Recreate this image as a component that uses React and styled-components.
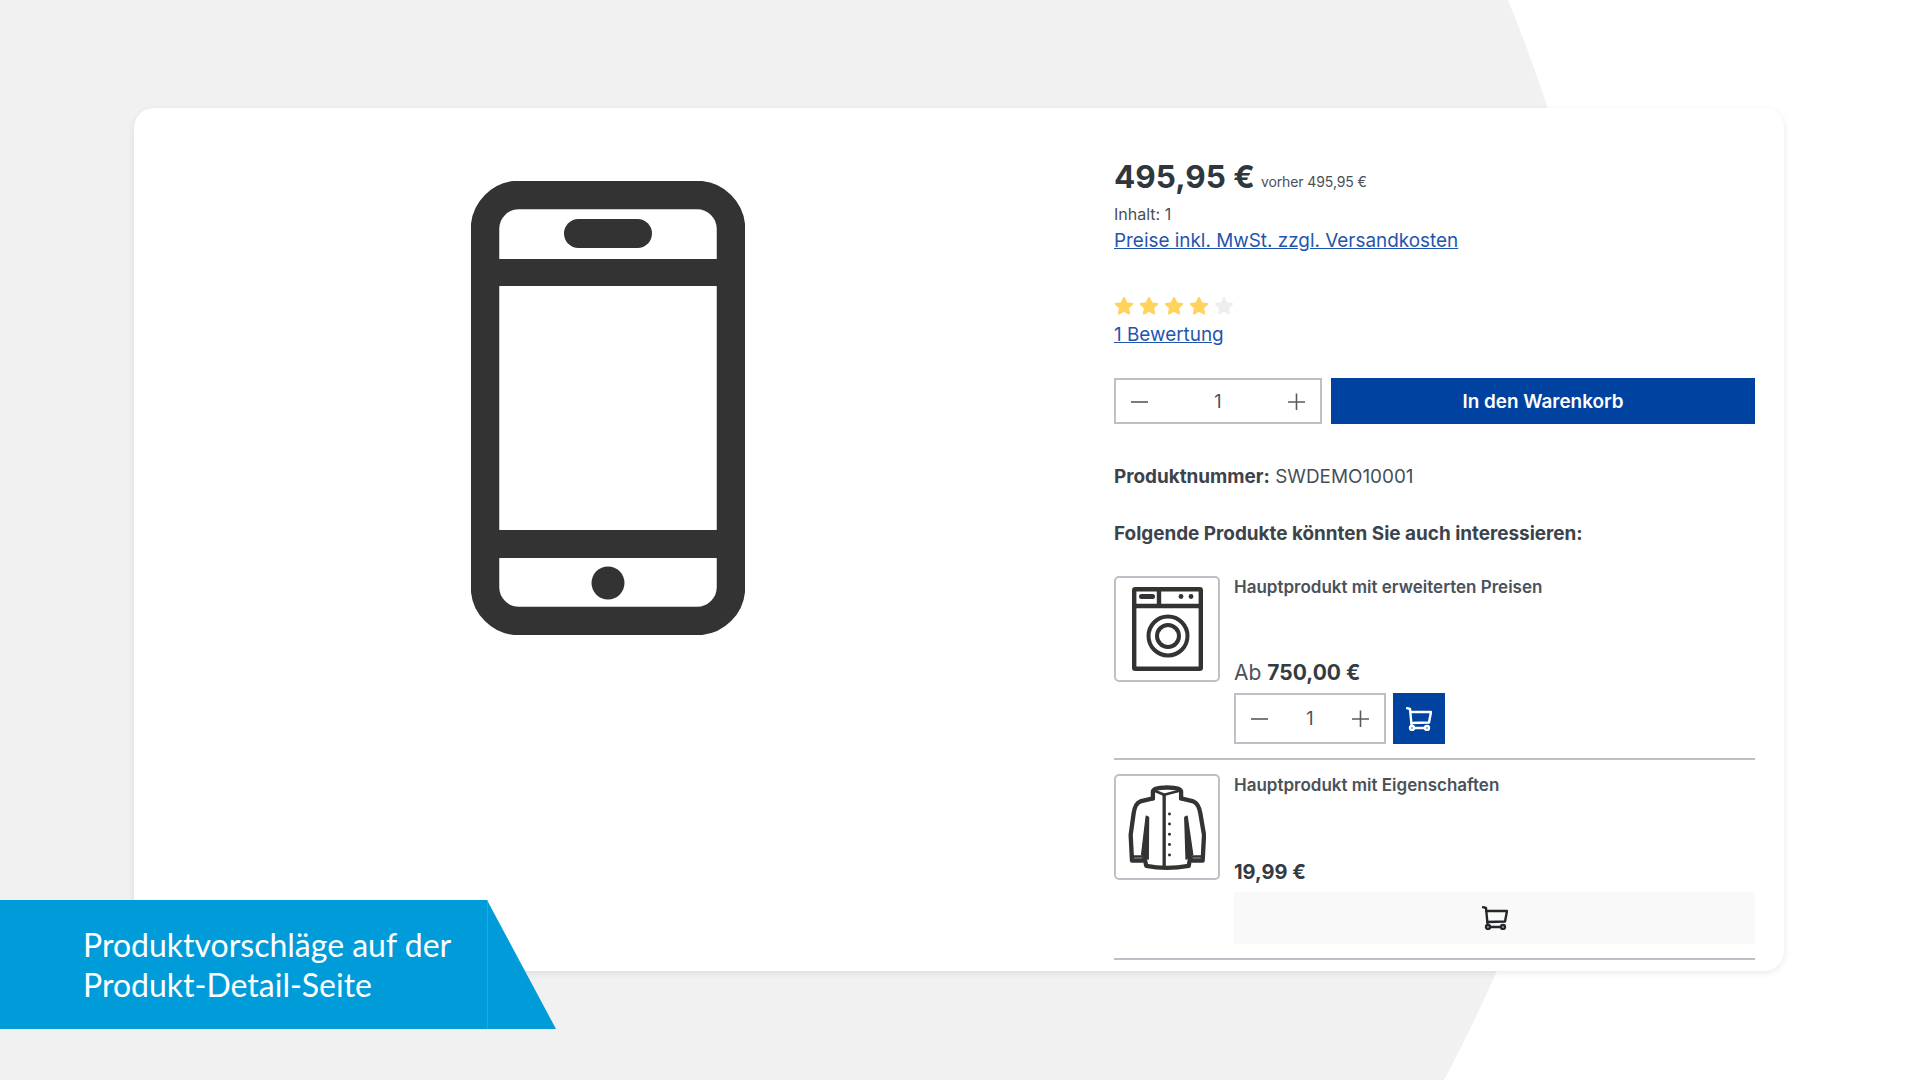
import styled, { createGlobalStyle } from "styled-components";

const GlobalStyle = createGlobalStyle`
  html, body {
    margin: 0;
    padding: 0;
    background: #fff;
  }
  * {
    box-sizing: border-box;
  }
`;

const Page = styled.div`
  position: relative;
  width: 1920px;
  height: 1080px;
  overflow: hidden;
  padding: 108px 136px 0 134px;
  background: #fff;
  font-family: Inter, "Liberation Sans", sans-serif;
  color: #474f57;
`;

const GreyShape = styled.div`
  position: absolute;
  inset: 0;
  background: #f1f1f1;
  clip-path: path("M0 0 H1508 C1652 350 1646 700 1444 1080 H0 Z");
`;

const Card = styled.main`
  position: relative;
  display: grid;
  grid-template-columns: 948px 641px;
  column-gap: 32px;
  height: 863px;
  background: #fff;
  border-radius: 20px;
  box-shadow: 0 2px 7px rgba(0, 0, 0, 0.09);
`;

const Gallery = styled.div`
  display: flex;
  justify-content: center;
  padding-top: 73px;
`;

const Details = styled.div`
  padding-top: 49px;
`;

const PriceLine = styled.div`
  display: flex;
  align-items: baseline;
  gap: 6px;
  height: 40px;
  line-height: 40px;
`;

const Price = styled.span`
  font-size: 31.5px;
  font-weight: 700;
  color: #2f363d;
`;

const OldPrice = styled.span`
  font-size: 14px;
  letter-spacing: -0.1px;
  color: #4a5058;
  position: relative;
  top: -1px;
`;

const Meta = styled.div`
  margin-top: 5px;
  font-size: 16px;
  line-height: 24px;
  color: #4a5058;
`;

const TextLink = styled.a`
  display: block;
  margin-top: ${(props) => props.$top}px;
  font-size: 18.9px;
  line-height: 24px;
  color: #1f55ae;
  text-decoration: underline;
`;

const Stars = styled.div`
  display: flex;
  gap: 5px;
  margin-top: 43px;
  height: 20px;
  align-items: center;
`;

const BuyRow = styled.div`
  display: flex;
  gap: 9px;
  margin-top: 31px;
`;

const QtyBox = styled.div`
  display: flex;
  align-items: center;
  justify-content: space-between;
  flex: none;
  width: ${(props) => props.$width}px;
  height: ${(props) => props.$height}px;
  padding: 0 15px;
  border: 2px solid #bcc1c8;
  background: #fff;
  font-size: 18px;
  color: #474f57;
`;

const BuyButton = styled.button`
  flex: 1;
  height: 46px;
  border: 0;
  background: #0042a0;
  color: #fff;
  font-family: inherit;
  font-size: 18.9px;
  font-weight: 600;
`;

const ProductNumber = styled.div`
  margin-top: 41px;
  font-size: 18.9px;
  line-height: 24px;
  b {
    font-weight: 700;
    color: #3c434a;
  }
`;

const SuggestTitle = styled.div`
  margin-top: 33px;
  font-size: 18.9px;
  line-height: 24px;
  font-weight: 700;
  color: #3c434a;
`;

const SuggestList = styled.div`
  margin-top: 30px;
`;

const SuggestItem = styled.div`
  display: grid;
  grid-template-columns: 106px 1fr;
  column-gap: 14px;
  padding-bottom: 14px;
  margin-bottom: 14px;
  border-bottom: 2px solid #bcc1c8;
`;

const Thumb = styled.div`
  display: flex;
  align-items: center;
  justify-content: center;
  width: 106px;
  height: 106px;
  border: 2px solid #bcc1c8;
  border-radius: 5px;
`;

const ItemTitle = styled.div`
  font-size: 17px;
  line-height: 20px;
  font-weight: 600;
  color: #4a5259;
  padding-top: 1px;
`;

const ItemPrice = styled.div`
  margin-top: ${(props) => props.$top}px;
  font-size: ${(props) => props.$size}px;
  line-height: 24px;
  color: #4a5259;
  b {
    font-weight: 700;
    color: #343b42;
  }
`;

const ItemBuy = styled.div`
  display: flex;
  gap: 7px;
  margin-top: 8px;
`;

const CartButton = styled.button`
  display: flex;
  align-items: center;
  justify-content: center;
  width: 52px;
  height: 51px;
  padding: 0;
  border: 0;
  background: #0042a0;
  color: #fff;
`;

const WideCartButton = styled(CartButton)`
  width: 100%;
  height: 52px;
  margin-top: 8px;
  background: #f9f9f9;
  color: #23272b;
`;

const Banner = styled.div`
  position: absolute;
  left: 0;
  top: 900px;
  width: 556px;
  height: 129px;
  display: flex;
  align-items: center;
  padding-left: 83px;
  background: #009cda;
  clip-path: polygon(0 0, 487px 0, 100% 100%, 0 100%);
  font-family: Lato, "Open Sans", "Liberation Sans", sans-serif;
  font-size: 32px;
  line-height: 40px;
  color: #fff;
  &::after {
    content: "";
    position: absolute;
    left: 487px;
    top: 0;
    bottom: 0;
    width: 1px;
    background: #22a7de;
  }
`;

function PhoneIcon() {
  return (
    <svg width="274" height="454" viewBox="0 0 274 454" fill="none">
      <rect x="14" y="14" width="246" height="426" rx="34" stroke="#333" strokeWidth="28.5" />
      <rect x="14" y="78" width="246" height="27" fill="#333" />
      <rect x="14" y="349" width="246" height="28" fill="#333" />
      <rect x="93" y="38" width="88" height="29" rx="14.5" fill="#333" />
      <circle cx="137" cy="402" r="16.5" fill="#333" />
    </svg>
  );
}

function WasherIcon() {
  return (
    <svg width="71" height="84" viewBox="0 0 71 84" fill="none" stroke="#333">
      <rect x="2.2" y="2.2" width="66.6" height="79.6" rx="1" strokeWidth="4.4" />
      <path d="M2 19H69M27 2V19" strokeWidth="4.4" />
      <rect x="7" y="7" width="16" height="5" rx="2.5" fill="#333" stroke="none" />
      <circle cx="49" cy="9.5" r="2.4" fill="#333" stroke="none" />
      <circle cx="59" cy="9.5" r="2.4" fill="#333" stroke="none" />
      <circle cx="36" cy="49" r="19.5" strokeWidth="4" />
      <circle cx="36" cy="49" r="11" strokeWidth="4" />
    </svg>
  );
}

function JacketIcon() {
  return (
    <svg width="78" height="85" viewBox="85 75 235 255" fill="none" stroke="#333" strokeWidth="13" strokeLinejoin="round" strokeLinecap="round">
      <path d="M160 115V95Q160 82 203 82Q245 82 245 95V115" />
      <path d="M165 92L194 104L240 92" strokeWidth="8" />
      <path d="M160 115L122 124Q106 130 102 160L93 225L97 302H128L135 295L140 318Q200 330 268 318L272 295L279 302H310L314 225L303 160Q298 130 282 124L245 115" />
      <path d="M194 105V322" strokeWidth="10" />
      <path d="M97 290H128M279 290H310" strokeWidth="8" />
      <path d="M140 168L147 172L146 298L126 284Z" fill="#333" strokeWidth="4" />
      <path d="M263 168L256 172L260 298L280 284Z" fill="#333" strokeWidth="4" />
      {[162, 192, 223, 254, 285].map((y) => (
        <circle key={y} cx="210" cy={y} r="4.5" fill="#333" stroke="none" />
      ))}
    </svg>
  );
}

function CartIcon() {
  return (
    <svg width="26" height="24" viewBox="0 0 26 24" fill="none" stroke="currentColor" strokeWidth="2.4" strokeLinecap="round" strokeLinejoin="round">
      <path d="M1 1.2L4 2L5.5 17.5" />
      <path d="M4.3 5H25L23 15.5L5.3 16" />
      <circle cx="6" cy="21" r="2" />
      <circle cx="21" cy="21" r="2" />
      <path d="M8 21H19" />
    </svg>
  );
}

function Star({ filled }) {
  return (
    <svg width="20" height="20" viewBox="0 0 20 20">
      <path
        d="M10 2L12.5 7.2L18.2 7.9L14 11.8L15.1 17.5L10 14.7L4.9 17.5L6 11.8L1.8 7.9L7.5 7.2Z"
        fill={filled ? "#ffd35c" : "#eeeeee"}
        stroke={filled ? "#ffd35c" : "#eeeeee"}
        strokeWidth="2"
        strokeLinejoin="round"
      />
    </svg>
  );
}

function MinusIcon() {
  return (
    <svg width="17" height="17" viewBox="0 0 17 17" stroke="#555c63" strokeWidth="1.6">
      <path d="M0 9H17" />
    </svg>
  );
}

function PlusIcon() {
  return (
    <svg width="17" height="17" viewBox="0 0 17 17" stroke="#555c63" strokeWidth="1.6">
      <path d="M0 9H17M8.5 0.5V17" />
    </svg>
  );
}

function Quantity({ width, height }) {
  return (
    <QtyBox $width={width} $height={height}>
      <MinusIcon />
      <span>1</span>
      <PlusIcon />
    </QtyBox>
  );
}

export default function App() {
  return (
    <Page>
      <GlobalStyle />
      <GreyShape />
      <Card>
        <Gallery>
          <PhoneIcon />
        </Gallery>
        <Details>
          <PriceLine>
            <Price>495,95 €</Price>
            <OldPrice>vorher 495,95 €</OldPrice>
          </PriceLine>
          <Meta>Inhalt: 1</Meta>
          <TextLink $top={3}>Preise inkl. MwSt. zzgl. Versandkosten</TextLink>
          <Stars>
            {[true, true, true, true, false].map((filled, i) => (
              <Star key={i} filled={filled} />
            ))}
          </Stars>
          <TextLink $top={7}>1 Bewertung</TextLink>
          <BuyRow>
            <Quantity width={208} height={46} />
            <BuyButton>In den Warenkorb</BuyButton>
          </BuyRow>
          <ProductNumber>
            <b>Produktnummer:</b> SWDEMO10001
          </ProductNumber>
          <SuggestTitle>Folgende Produkte könnten Sie auch interessieren:</SuggestTitle>
          <SuggestList>
            <SuggestItem>
              <Thumb>
                <WasherIcon />
              </Thumb>
              <div>
                <ItemTitle>Hauptprodukt mit erweiterten Preisen</ItemTitle>
                <ItemPrice $top={64} $size={21}>
                  Ab <b>750,00 €</b>
                </ItemPrice>
                <ItemBuy>
                  <Quantity width={152} height={51} />
                  <CartButton>
                    <CartIcon />
                  </CartButton>
                </ItemBuy>
              </div>
            </SuggestItem>
            <SuggestItem>
              <Thumb>
                <JacketIcon />
              </Thumb>
              <div>
                <ItemTitle>Hauptprodukt mit Eigenschaften</ItemTitle>
                <ItemPrice $top={65} $size={20}>
                  <b>19,99 €</b>
                </ItemPrice>
                <WideCartButton>
                  <CartIcon />
                </WideCartButton>
              </div>
            </SuggestItem>
          </SuggestList>
        </Details>
      </Card>
      <Banner>
        <div>
          Produktvorschläge auf der
          <br />
          Produkt-Detail-Seite
        </div>
      </Banner>
    </Page>
  );
}
